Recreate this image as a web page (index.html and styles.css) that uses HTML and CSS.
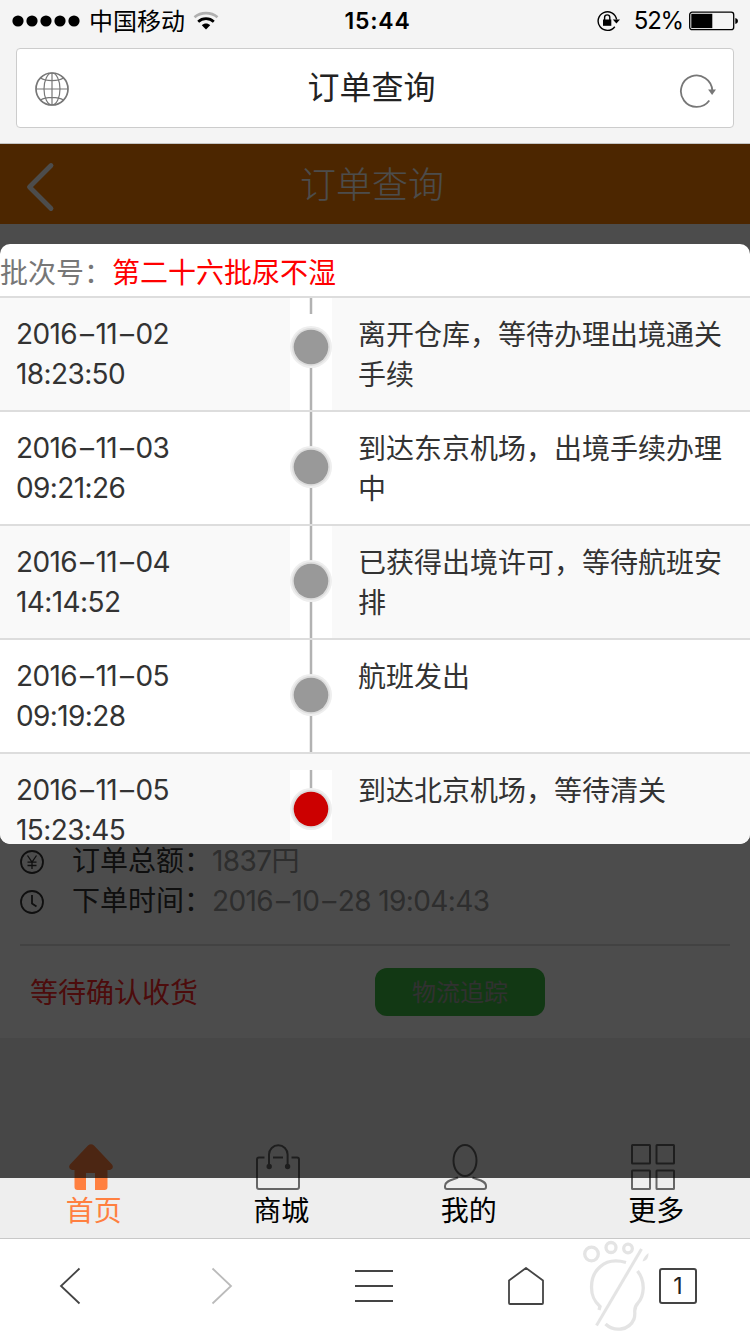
FILE: index.html
```html
<!DOCTYPE html>
<html lang="zh-CN">
<head>
  <meta charset="UTF-8">
  <meta name="viewport" content="width=750">
  <title>订单查询</title>
  <link rel="stylesheet" href="styles.css">
</head>
<body>
  <div class="browser-top">
    <div class="status-bar">
      <div class="status-left">
        <svg class="signal" width="68" height="12" viewBox="0 0 68 12">
          <circle cx="6" cy="6" r="5.6"/>
          <circle cx="20" cy="6" r="5.6"/>
          <circle cx="34" cy="6" r="5.6"/>
          <circle cx="48" cy="6" r="5.6"/>
          <circle cx="62" cy="6" r="5.6"/>
        </svg>
        <span class="carrier">中国移动</span>
        <svg class="wifi" width="26" height="20" viewBox="0 0 26 20" fill="none" stroke-width="2.7">
          <path d="M1.500 6.200C8 .8 18 .8 24.500 6.200" stroke="#b0b0b0"/>
          <path d="M5.200 10.700C9.500 6.600 16.500 6.600 20.800 10.700" stroke="#000"/>
          <path d="M8.800 14.300C11 12 15 12 17.200 14.300L13 18.500Z" fill="#000" stroke="none"/>
        </svg>
      </div>
      <div class="status-time">15:44</div>
      <div class="status-right">
        <svg class="rotation-lock" width="23" height="22" viewBox="0 0 23 22" fill="none" stroke="#000" stroke-width="1.400">
          <path d="M19.600 9.500A9.300 9.300 0 1 0 17.800 16.700"/>
          <path d="M15.800 9.500H23L19.400 13.500Z" fill="#000" stroke="none"/>
          <rect x="6" y="9.500" width="8.300" height="6.300" fill="#000" stroke="none"/>
          <path d="M7.600 10V7.500a2.600 2.600 0 0 1 5.200 0V10"/>
        </svg>
        <span class="percent">52%</span>
        <svg class="battery" width="49" height="20" viewBox="0 0 49 20">
          <rect x=".7" y="1.200" width="44" height="17.500" rx="2.500" fill="none" stroke="#000" stroke-width="1.300"/>
          <rect x="2.300" y="2.800" width="21" height="14.300"/>
          <path d="M46.300 7q2.700.5 2.700 3t-2.700 3z"/>
        </svg>
      </div>
    </div>
    <div class="address-box">
      <svg class="globe" width="36" height="36" viewBox="0 0 36 36" fill="none" stroke="#777" stroke-width="1.200">
        <circle cx="18" cy="18" r="16" stroke-width="1.700"/>
        <ellipse cx="18" cy="18" rx="8" ry="16"/>
        <path d="M18 2V34M2 18H34M6.500 7C12 10.500 24 10.500 29.500 7M6.500 29C12 25.500 24 25.500 29.500 29"/>
      </svg>
      <span class="address-title">订单查询</span>
      <svg class="reload" width="38" height="36" viewBox="0 0 38 36" fill="none" stroke="#777" stroke-width="1.800">
        <path d="M34.300 16.500A15.700 15.700 0 1 0 31.300 26.500"/>
        <path d="M30.100 15.500H38L34.100 21Z" fill="#777" stroke="none"/>
      </svg>
    </div>
  </div>

  <div class="page">
    <header class="page-header">
      <svg class="back" width="30" height="50" viewBox="0 0 30 50" fill="none" stroke="#fff" stroke-width="4.800" stroke-linecap="round" stroke-linejoin="round">
        <path d="M26 3.500L4.500 25L26 46.500"/>
      </svg>
      <h1>订单查询</h1>
    </header>

    <section class="order">
      <div class="order-row">
        <svg width="24" height="24" viewBox="0 0 24 24" fill="none" stroke="#333" stroke-width="1.800">
          <circle cx="12" cy="12" r="11"/>
          <path d="M7.500 5.500L12 12L16.500 5.500M12 12V19M7.500 12.200H16.500M7.500 15.500H16.500" stroke-width="1.300"/>
        </svg>
        <span class="label">订单总额：</span>
        <span class="value">1837円</span>
      </div>
      <div class="order-row">
        <svg width="24" height="24" viewBox="0 0 24 24" fill="none" stroke="#333" stroke-width="1.800">
          <circle cx="12" cy="12" r="11"/>
          <path d="M12 5V13.500L16.500 16.500"/>
        </svg>
        <span class="label">下单时间：</span>
        <span class="value">2016<i>–</i>10<i>–</i>28 19:04:43</span>
      </div>
      <div class="order-footer">
        <span class="order-state">等待确认收货</span>
        <button class="track-button">物流追踪</button>
      </div>
    </section>

    <nav class="tabs">
      <a class="tab active">
        <svg width="44" height="46" viewBox="0 0 44 46" fill="#ff8040">
          <path d="M19 1.500Q22 -1.200 25 1.500L43 20.500Q45.500 24.500 41 26H38.500V43Q38.500 46 35.500 46H26V29H17V46H8.500Q5.500 46 5.500 43V26H3Q-1.500 24.500 1 20.500Z"/>
        </svg>
        <span>首页</span>
      </a>
      <a class="tab">
        <svg width="44" height="46" viewBox="0 0 44 46" fill="none" stroke="#666" stroke-width="2">
          <path d="M8.500 13.500H3Q1 13.500 1 15.500V43Q1 45 3 45H41Q43 45 43 43V15.500Q43 13.500 41 13.500H35.500M17 13.500H27"/>
          <path d="M13 22V10.500a9.300 9.300 0 0 1 18.600 0V22"/>
          <circle cx="13.200" cy="22.500" r="1.700" fill="#666"/>
          <circle cx="31.600" cy="22.500" r="1.700" fill="#666"/>
        </svg>
        <span>商城</span>
      </a>
      <a class="tab">
        <svg width="44" height="46" viewBox="0 0 44 46" fill="none" stroke="#666" stroke-width="2">
          <ellipse cx="21" cy="16.500" rx="11.500" ry="15.500"/>
          <path d="M14 33.500C9 36 1 36.500 1 42V43Q1 45 3 45H40Q42 45 42 43V42C42 36.500 34 36 28.500 33.500"/>
        </svg>
        <span>我的</span>
      </a>
      <a class="tab">
        <svg width="44" height="46" viewBox="0 0 44 46" fill="none" stroke="#666" stroke-width="2">
          <rect x="1" y="1" width="18" height="18.500" rx=".5"/>
          <rect x="25.500" y="1" width="17.500" height="18.500" rx=".5"/>
          <rect x="1" y="26.500" width="18" height="18.500" rx=".5"/>
          <rect x="25.500" y="26.500" width="17.500" height="18.500" rx=".5"/>
        </svg>
        <span>更多</span>
      </a>
    </nav>

    <div class="mask"></div>

    <div class="dialog">
      <div class="batch">批次号：<em>第二十六批尿不湿</em></div>
      <div class="step">
        <div class="step-time">2016<i>–</i>11<i>–</i>02<br>18:23:50</div>
        <svg class="step-mark" width="42" height="112" viewBox="0 0 42 112">
          <path class="line" d="M21 0V16M21 66V112"/>
          <circle class="halo" cx="21" cy="49" r="21"/>
          <circle class="ring" cx="21" cy="49" r="19"/>
          <circle class="dot" cx="21" cy="49" r="17.300"/>
        </svg>
        <div class="step-text">离开仓库，等待办理出境通关手续</div>
      </div>
      <div class="step">
        <div class="step-time">2016<i>–</i>11<i>–</i>03<br>09:21:26</div>
        <svg class="step-mark" width="42" height="112" viewBox="0 0 42 112">
          <path class="line" d="M21 0V112"/>
          <circle class="halo" cx="21" cy="55" r="21"/>
          <circle class="ring" cx="21" cy="55" r="19"/>
          <circle class="dot" cx="21" cy="55" r="17.300"/>
        </svg>
        <div class="step-text">到达东京机场，出境手续办理中</div>
      </div>
      <div class="step">
        <div class="step-time">2016<i>–</i>11<i>–</i>04<br>14:14:52</div>
        <svg class="step-mark" width="42" height="112" viewBox="0 0 42 112">
          <path class="line" d="M21 0V112"/>
          <circle class="halo" cx="21" cy="55" r="21"/>
          <circle class="ring" cx="21" cy="55" r="19"/>
          <circle class="dot" cx="21" cy="55" r="17.300"/>
        </svg>
        <div class="step-text">已获得出境许可，等待航班安排</div>
      </div>
      <div class="step">
        <div class="step-time">2016<i>–</i>11<i>–</i>05<br>09:19:28</div>
        <svg class="step-mark" width="42" height="112" viewBox="0 0 42 112">
          <path class="line" d="M21 0V112"/>
          <circle class="halo" cx="21" cy="55" r="21"/>
          <circle class="ring" cx="21" cy="55" r="19"/>
          <circle class="dot" cx="21" cy="55" r="17.300"/>
        </svg>
        <div class="step-text">航班发出</div>
      </div>
      <div class="step">
        <div class="step-time">2016<i>–</i>11<i>–</i>05<br>15:23:45</div>
        <svg class="step-mark current" width="42" height="70" viewBox="0 0 42 70">
          <path class="line" d="M21 0V39"/>
          <circle class="halo" cx="21" cy="39" r="21"/>
          <circle class="ring" cx="21" cy="39" r="19"/>
          <circle class="dot" cx="21" cy="39" r="17.300"/>
        </svg>
        <div class="step-text">到达北京机场，等待清关</div>
      </div>
    </div>
  </div>

  <div class="browser-bottom">
    <div class="tool">
      <svg width="22" height="38" viewBox="0 0 22 38" fill="none" stroke="#444" stroke-width="1.800">
        <path d="M20.500 1.500L2 19L20.500 36.500"/>
      </svg>
    </div>
    <div class="tool">
      <svg width="22" height="38" viewBox="0 0 22 38" fill="none" stroke="#bbb" stroke-width="1.800">
        <path d="M1.500 1.500L20 19L1.500 36.500"/>
      </svg>
    </div>
    <div class="tool">
      <svg width="38" height="34" viewBox="0 0 38 34" stroke="#444" stroke-width="2">
        <path d="M0 2H38M0 17H38M0 32H38"/>
      </svg>
    </div>
    <div class="tool">
      <svg width="36" height="38" viewBox="0 0 36 38" fill="none" stroke="#444" stroke-width="1.800" stroke-linejoin="round">
        <path d="M1 13.500L18 1L35 13.500V36Q35 37 34 37H2Q1 37 1 36Z"/>
      </svg>
    </div>
    <div class="tool">
      <span class="windows">1</span>
    </div>
    <svg class="footprint" width="70" height="92" viewBox="0 0 70 92" fill="none" stroke="#e4e4e4" stroke-width="3.300">
      <circle cx="10.500" cy="14" r="6.800"/>
      <circle cx="30" cy="7.500" r="5"/>
      <circle cx="47" cy="8.500" r="4.300"/>
      <path d="M67.500 13Q68 20 61.500 21.500Q63 16 67.500 13Z" fill="#e4e4e4" stroke="none"/>
      <path d="M45 22.500C22 16 10.500 32 10.500 47C10.500 56 13 61 19 66.500L18 70"/>
      <path d="M56.500 31C65 42 63 56 57 63C51 69 55.500 72 53 79C48 91 33 92 24.500 84"/>
      <path d="M60.500 9L15.500 85.500" stroke-width="3"/>
    </svg>
  </div>
</body>
</html>
```

FILE: styles.css
```css
* {
  box-sizing: border-box;
}
body {
  margin: 0;
  width: 750px;
  height: 1334px;
  overflow: hidden;
  background: #eee;
  font-family: Inter, "Noto Sans CJK SC", sans-serif;
  font-size: 28px;
  line-height: 40px;
  color: #333;
}
svg {
  display: block;
  flex: none;
}
i {
  font-style: normal;
  margin: 0 2px 0 3px;
}

/* browser chrome, top */
.browser-top {
  height: 144px;
  padding: 0 16px;
  background: #f4f4f4;
  border-bottom: 1px solid #c4c4c4;
}
.status-bar {
  height: 41px;
  margin: 0 -4px;
  display: grid;
  grid-template-columns: 1fr auto 1fr;
  align-items: center;
  font-size: 24px;
  color: #000;
}
.status-left,
.status-right {
  display: flex;
  align-items: center;
}
.status-right {
  justify-content: flex-end;
}
.carrier {
  margin-left: 9px;
  padding-top: 2px;
}
.wifi {
  margin-left: 8px;
}
.status-time {
  margin-left: 5px;
  font-weight: 600;
  font-size: 23px;
  letter-spacing: 0.8px;
}
.percent {
  margin: 0 6px 0 14px;
  font-size: 24px;
  letter-spacing: -1.2px;
}
.address-box {
  height: 80px;
  margin-top: 7px;
  padding: 0 17px;
  display: flex;
  align-items: center;
  justify-content: space-between;
  background: #fff;
  border: 1px solid #ccc;
  border-radius: 4px;
}
.globe {
  margin-top: 2px;
}
.address-title {
  margin-right: 5px;
  font-size: 32px;
  color: #222;
}
.reload {
  margin-top: 8px;
}

/* page */
.page {
  position: relative;
  height: 1094px;
  display: flex;
  flex-direction: column;
}
.page-header {
  height: 80px;
  flex: none;
  display: grid;
  grid-template-columns: 57px 1fr 63px;
  align-items: center;
  background: #ff8000;
  color: #fff;
}
.page-header .back {
  margin: 6px 0 0 25px;
}
.page-header h1 {
  margin: 2px 0 0;
  font-size: 36px;
  font-weight: 300;
  text-align: center;
}
.order {
  height: 814px;
  flex: none;
  display: flex;
  flex-direction: column;
  justify-content: flex-end;
  padding: 0 20px;
  background: #fff;
}
.order-row {
  display: flex;
  align-items: center;
  height: 40px;
  padding-top: 2px;
}
.order-row svg {
  margin-top: 2px;
}
.order-row .label {
  width: 140px;
  margin-left: 28px;
  color: #333;
}
.order-row .value {
  color: #999;
  letter-spacing: -0.6px;
}
.order-footer {
  height: 94px;
  margin-top: 24px;
  padding: 0 0 0 10px;
  display: flex;
  align-items: center;
  border-top: 2px solid #ddd;
}
.order-state {
  width: 345px;
  padding-top: 2px;
  color: #ff2a2a;
}
.track-button {
  width: 170px;
  height: 48px;
  padding: 2px 0 0;
  border: none;
  border-radius: 12px;
  background: #3fbb43;
  color: #a4a4a4;
  font: inherit;
  font-size: 24px;
}
.tabs {
  display: flex;
  height: 108px;
  margin-top: auto;
  padding-top: 14px;
  background: #eee;
}
.tab {
  width: 25%;
  display: flex;
  flex-direction: column;
  align-items: center;
  color: #000;
}
.tab svg {
  margin: 0 6px 1px 0;
}
.tab.active {
  color: #ff8040;
}
.mask {
  position: absolute;
  top: 0;
  left: 0;
  width: 100%;
  height: 1034px;
  background: rgba(0, 0, 0, 0.7);
}

/* tracking dialog */
.dialog {
  position: absolute;
  top: 100px;
  left: 0;
  width: 100%;
  height: 600px;
  overflow: hidden;
  background: #fff;
  border-radius: 10px;
}
.batch {
  height: 52px;
  line-height: 58px;
  color: #777;
}
.batch em {
  font-style: normal;
  color: #f00;
}
.step {
  display: flex;
  height: 114px;
  border-top: 2px solid #ddd;
}
.step:nth-child(even) {
  background: #f9f9f9;
}
.step-time {
  width: 290px;
  padding: 16px;
  letter-spacing: -0.6px;
}
.step-text {
  width: 400px;
  padding: 17px 10px 0 26px;
}
.step-mark {
  background: #fff;
}
.step-mark.current {
  margin-top: 16px;
}
.step-mark .line {
  stroke: #b2b2b2;
  stroke-width: 2.5;
}
.step-mark .halo {
  fill: #eee;
}
.step-mark .ring {
  fill: #ddd;
}
.step-mark .dot {
  fill: #999;
}
.step-mark.current .dot {
  fill: #c00;
}

/* browser chrome, bottom */
.browser-bottom {
  position: relative;
  display: flex;
  height: 96px;
  padding-bottom: 2px;
  background: #fff;
  border-top: 1px solid #c8c8c8;
}
.tool {
  width: 152px;
  flex: none;
  display: flex;
  align-items: center;
  justify-content: center;
}
.tool:first-child {
  width: 140px;
  margin-right: 6px;
}
.windows {
  width: 38px;
  height: 36px;
  line-height: 32px;
  border: 2px solid #444;
  border-radius: 3px;
  font-size: 23px;
  text-align: center;
  color: #222;
}
.footprint {
  position: absolute;
  top: 1px;
  left: 581px;
}
```
